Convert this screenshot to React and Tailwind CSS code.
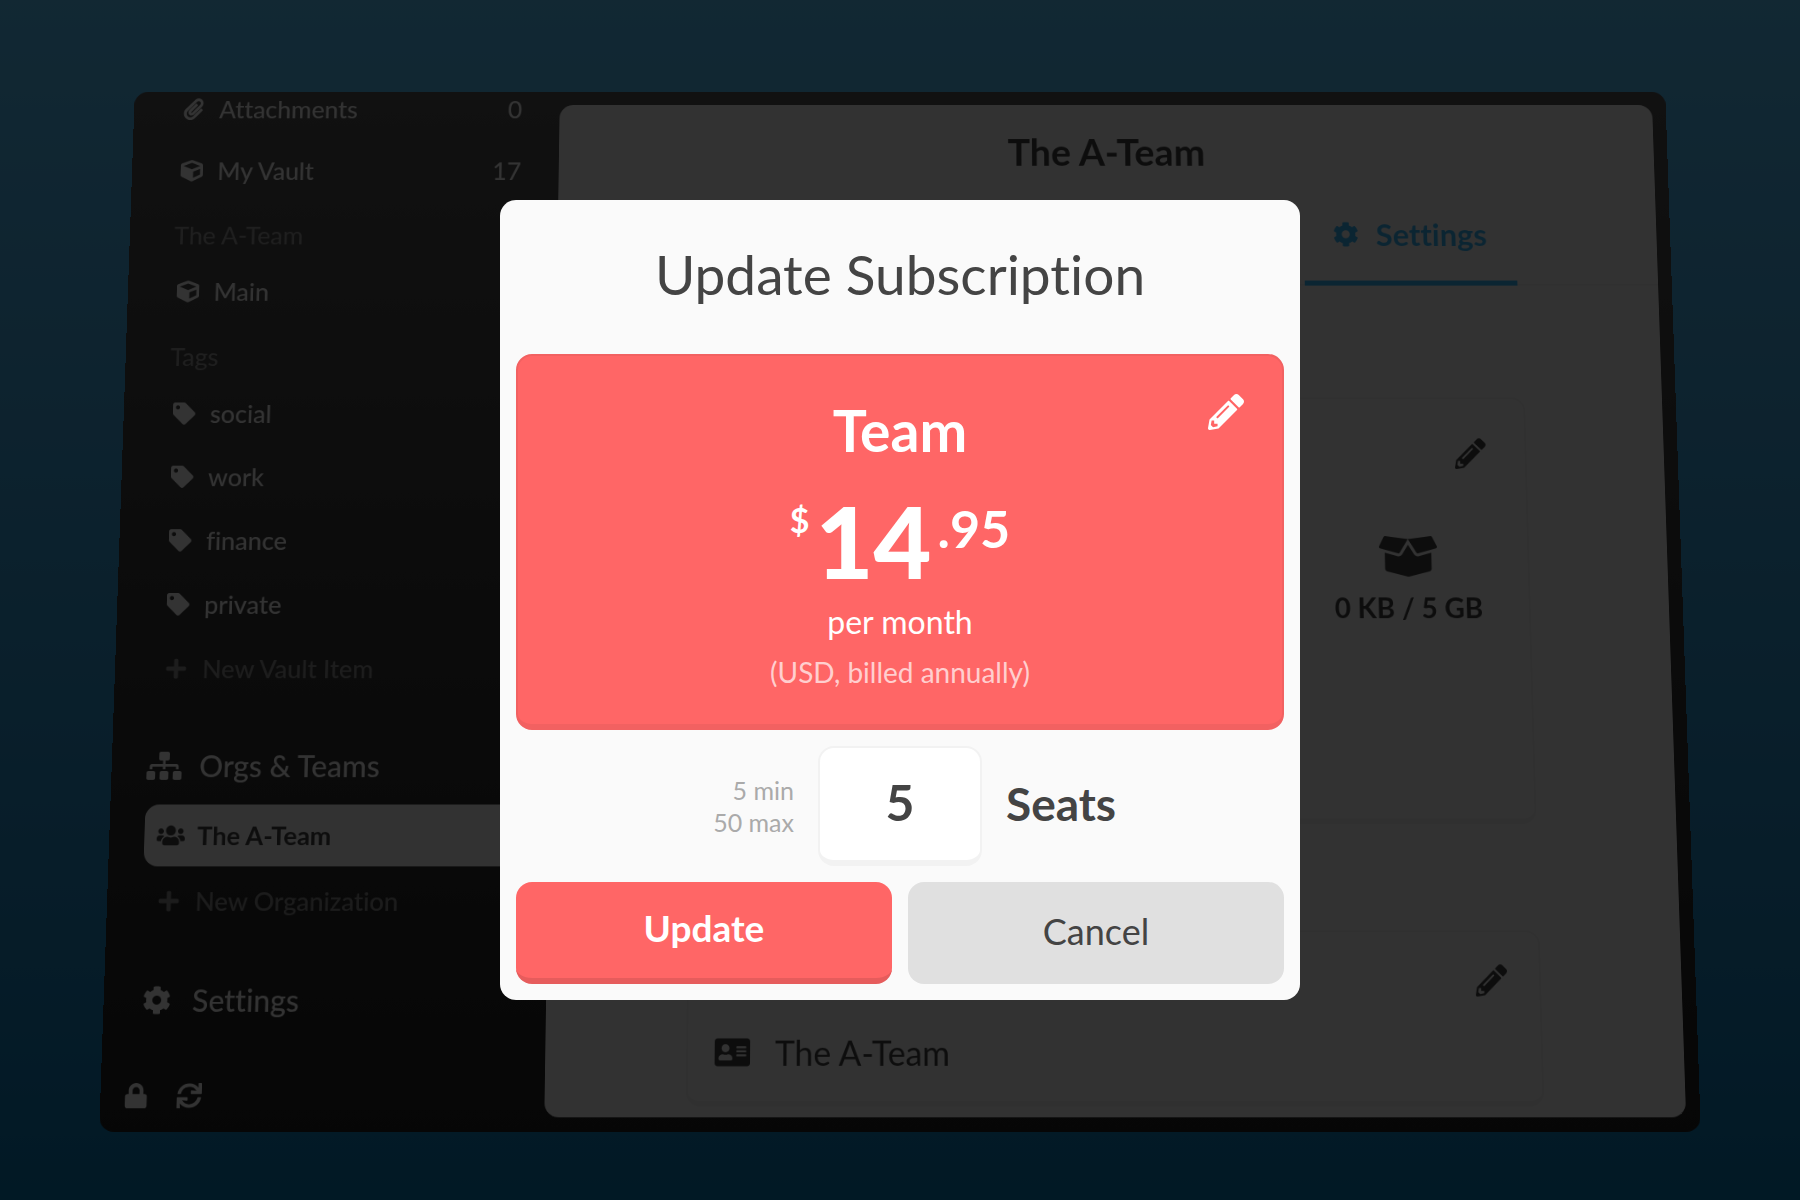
import React from "react";
import {
  FaPaperclip, FaCube, FaTag, FaPlus, FaSitemap, FaUsers, FaCog, FaLock, FaSync,
  FaPencilAlt, FaBoxOpen, FaAddressCard,
} from "react-icons/fa";

function SideItem({ icon: Icon, iconSize = 26, label, count, muted, active }) {
  const tone = active
    ? "bg-[#fafafa] text-[#444444] font-bold"
    : muted
      ? "text-white/45 font-medium"
      : "text-white font-medium";
  return (
    <li className="shrink-0">
      <button
        type="button"
        className={`my-0.5 flex h-[70px] w-full items-center gap-4 rounded-2xl px-4 text-left text-[29px] leading-8 ${tone}`}
      >
        <span className="flex w-7 justify-center">
          <Icon size={iconSize} className="shrink-0" />
        </span>
        <span className="flex-1">{label}</span>
        {count !== undefined && <span>{count}</span>}
      </button>
    </li>
  );
}

function SideHeader({ children }) {
  return (
    <li className="flex h-[70px] shrink-0 items-center px-3 pt-2.5 text-[29px] leading-8 text-white/45">
      {children}
    </li>
  );
}

function SideSection({ icon: Icon, iconSize, label }) {
  return (
    <li className="shrink-0">
      <button
        type="button"
        className="mt-8 flex h-[84px] w-full items-center gap-5 text-left text-[34px] leading-10 font-medium text-white"
      >
        <span className="flex w-10 justify-center">
          <Icon size={iconSize} className="shrink-0" />
        </span>
        {label}
      </button>
    </li>
  );
}

function Sidebar() {
  return (
    <aside className="flex w-[500px] shrink-0 flex-col">
      <ul className="flex min-h-0 flex-1 flex-col justify-end overflow-hidden pr-7 pb-6 pl-10">
        <SideItem icon={FaPaperclip} label="Attachments" count={0} />
        <SideItem icon={FaCube} label="My Vault" count={17} />
        <SideHeader>The A-Team</SideHeader>
        <SideItem icon={FaCube} label="Main" />
        <SideHeader>Tags</SideHeader>
        <SideItem icon={FaTag} label="social" />
        <SideItem icon={FaTag} label="work" />
        <SideItem icon={FaTag} label="finance" />
        <SideItem icon={FaTag} label="private" />
        <SideItem icon={FaPlus} label="New Vault Item" muted />
        <SideSection icon={FaSitemap} iconSize={40} label="Orgs & Teams" />
        <SideItem icon={FaUsers} iconSize={32} label="The A-Team" active />
        <SideItem icon={FaPlus} label="New Organization" muted />
        <SideSection icon={FaCog} iconSize={32} label="Settings" />
      </ul>
      <div className="flex h-20 items-center gap-8 px-[26px] text-white">
        <button type="button" aria-label="Lock"><FaLock size={28} /></button>
        <button type="button" aria-label="Synchronize"><FaSync size={28} /></button>
      </div>
    </aside>
  );
}

function OrgSettings() {
  return (
    <main className="my-4 mr-4 flex flex-1 flex-col overflow-hidden rounded-2xl bg-[#fafafa] text-[#444444]">
      <h2 className="pt-8 pb-9 text-center text-[44px] leading-[48px] font-bold">The A-Team</h2>
      <nav className="flex justify-end pr-[164px] shadow-[inset_0_-2px_0_#eeeeee]">
        <button
          type="button"
          className="flex h-[100px] w-[248px] items-center justify-center gap-5 border-b-6 border-[#3bb7f9] pb-4 text-[36px] leading-10 font-bold text-[#3bb7f9]"
        >
          <FaCog size={30} />
          Settings
        </button>
      </nav>
      <div className="mx-auto flex w-[966px] max-w-full flex-col gap-[120px] pt-[132px]">
        <section className="flex h-[492px] flex-col items-end rounded-2xl border-2 border-b-6 border-[#eeeeee] pt-[46px] pr-[45px]">
          <button type="button" aria-label="Edit subscription"><FaPencilAlt size={36} /></button>
          <div className="mt-[68px] flex w-[186px] flex-col items-center gap-1.5">
            <FaBoxOpen size={67} />
            <p className="text-[32px] leading-10 font-bold whitespace-nowrap">0 KB / 5 GB</p>
          </div>
        </section>
        <section className="flex h-[196px] flex-col rounded-2xl border-2 border-b-6 border-[#eeeeee] pt-9 pr-9 pl-[30px]">
          <button type="button" aria-label="Edit organization" className="self-end">
            <FaPencilAlt size={36} />
          </button>
          <div className="mt-[38px] flex items-center gap-7 text-[38px] leading-[48px]">
            <FaAddressCard size={40} />
            The A-Team
          </div>
        </section>
      </div>
    </main>
  );
}

function UpdateDialog() {
  return (
    <form
      role="dialog"
      aria-labelledby="dialog-title"
      onSubmit={(e) => e.preventDefault()}
      className="flex w-[800px] max-w-full flex-col rounded-2xl bg-[#fafafa] p-4 text-[#444444]"
    >
      <h1 id="dialog-title" className="pt-[26px] pb-12 text-center text-[55px] leading-[64px]">
        Update Subscription
      </h1>
      <section className="relative flex h-[376px] flex-col items-center rounded-2xl border-2 border-b-6 border-[#f26161] bg-[#ff6666] text-white">
        <button type="button" aria-label="Change plan" className="absolute top-[38px] right-[38px]">
          <FaPencilAlt size={36} />
        </button>
        <h2 className="mt-[42px] text-[57px] leading-[64px] font-bold">Team</h2>
        <p className="mt-6 flex items-start gap-1.5 font-bold">
          <span className="mt-3.5 text-[34px] leading-10">$</span>
          <span className="text-[100px] leading-[108px] font-black">14</span>
          <span className="mt-3.5 text-[52px] leading-14">.95</span>
        </p>
        <p className="mt-2 text-[32px] leading-10">per month</p>
        <p className="mt-2.5 text-[28px] leading-10 text-white/70">(USD, billed annually)</p>
      </section>
      <div className="grid grid-cols-[1fr_164px_1fr] items-center gap-6 py-4">
        <p className="text-right text-[25px] leading-8 text-[#aaaaaa]">
          5 min
          <br />
          50 max
        </p>
        <input
          id="seats"
          type="text"
          inputMode="numeric"
          defaultValue="5"
          className="h-[120px] w-full rounded-2xl border-2 border-b-6 border-[#f2f2f2] bg-white pb-1 text-center text-[50px] font-bold"
        />
        <label htmlFor="seats" className="pb-1 text-[46px] leading-[52px] font-bold">Seats</label>
      </div>
      <div className="grid grid-cols-2 gap-4">
        <button
          type="submit"
          className="h-[102px] rounded-2xl border-b-6 border-[#e65c5c] bg-[#ff6666] pb-1 text-[37px] font-bold text-white"
        >
          Update
        </button>
        <button type="button" className="h-[102px] rounded-2xl bg-[#e0e0e0] pb-1 text-[36px]">
          Cancel
        </button>
      </div>
    </form>
  );
}

export default function App() {
  return (
    <div className="relative h-screen overflow-hidden bg-linear-to-b from-[#59c6ff] to-[#077cb9] font-['Lato',sans-serif] [font-variant-ligatures:no-common-ligatures]">
      <div className="h-full [perspective:2000px]">
        <div className="flex h-full overflow-hidden rounded-2xl bg-linear-to-b from-[#555555] to-[#222222] [transform:translateZ(-300px)_rotateX(5deg)]">
          <Sidebar />
          <OrgSettings />
        </div>
      </div>
      <div className="absolute inset-0 flex items-center justify-center bg-black/80">
        <UpdateDialog />
      </div>
    </div>
  );
}
